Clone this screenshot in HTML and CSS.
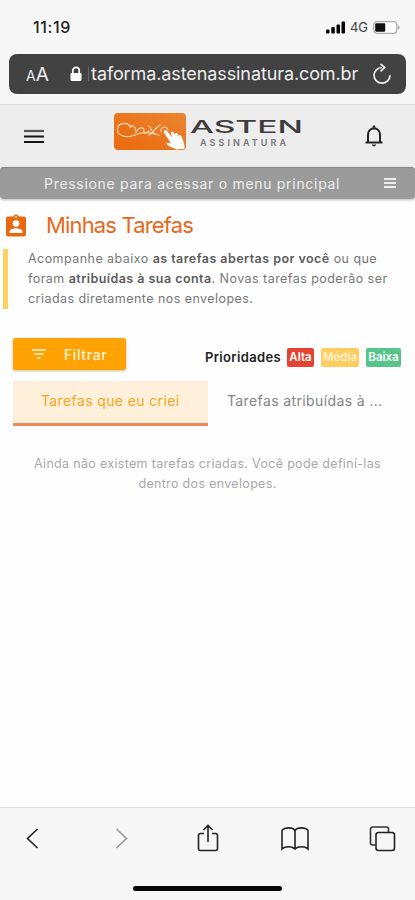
FILE: index.html
```
<!DOCTYPE html>
<html lang="pt-BR">

<head>
    <meta charset="utf-8">
    <title>Minhas Tarefas</title>
    <link rel="stylesheet" href="styles.css">
</head>

<body>
    <div class="browser-top">
        <div class="status">
            <span class="time">11:19</span>
            <svg class="signal" width="20" height="13" viewBox="0 0 20 13">
                <rect x="0" y="8.500" width="3.500" height="4" rx="1" />
                <rect x="5.300" y="6" width="3.500" height="6.500" rx="1" />
                <rect x="10.500" y="3.500" width="3.500" height="9" rx="1" />
                <rect x="15.500" y="0.500" width="3.500" height="12" rx="1" />
            </svg>
            <span class="network">4G</span>
            <svg class="battery" width="27" height="13" viewBox="0 0 27 13">
                <rect x="0.700" y="0.700" width="23" height="11.600" rx="3" fill="#fff" stroke="#aaa" stroke-width="1.200" />
                <rect x="2.200" y="2.300" width="10" height="8.400" rx="1" fill="#111" />
                <path d="M25 4.500q1.500.5 1.500 2t-1.500 2z" fill="#999" />
            </svg>
        </div>
        <div class="address">
            <span class="text-size"><small>A</small>A</span>
            <svg class="lock" width="12" height="16" viewBox="0 0 12 16">
                <rect x="0.500" y="7" width="11" height="8" rx="1.200" fill="#fff" />
                <path d="M2.800 7.500V4.500a3.200 3.200 0 0 1 6.400 0v3" fill="none" stroke="#fff" stroke-width="1.700" />
            </svg>
            <span class="url">taforma.astenassinatura.com.br</span>
            <svg class="reload" width="20" height="22" viewBox="0 0 20 22" fill="none" stroke="#eee" stroke-width="1.700">
                <path d="M10 4.500a8 7.800 0 1 0 8 7.800M8.500 0.800l4.200 3.700-4.200 3.900" />
            </svg>
        </div>
    </div>

    <div class="header">
        <svg class="menu" width="20" height="15" viewBox="0 0 20 15">
            <path d="M0 2h20" stroke="#555" stroke-width="2.200" />
            <path d="M0 7.500h20M0 13h20" stroke="#161616" stroke-width="2.200" />
        </svg>
        <svg class="logo" width="190" height="40" viewBox="0 0 190 40">
            <defs>
                <linearGradient id="orange" x1="0" y1="1" x2="1" y2="0">
                    <stop offset="0" stop-color="#ea690d" />
                    <stop offset="1" stop-color="#ea8530" />
                </linearGradient>
            </defs>
            <rect x="0" y="1" width="72" height="37" rx="4" fill="url(#orange)" />
            <path d="M17 15C12 9 3 11 3.500 18c.5 7 11 8 17 5 7-3 13-4 20-1M16 15c3-3 6 0 6 5 3-5 7-6 8-2-1 4 2 4 5 1M35 14c2 4 5 9 10 9M46 13c-4 2-7 8-11 10M47 20c-1-5 6-7 7-2" fill="none" stroke="#ffd5b2" stroke-width="1.200" stroke-linecap="round" />
            <path d="M50 18.500c1-1.200 2.500-.3 3.200.7l4.800 6-1-4.500c.8-1.500 2.400-1 3 .2l.8 1.700c.2-2.200 2.500-2 3.200-.1l.6 1.600c.4-1.700 2.300-1.500 2.800.2l2.300 6.200c.8 2.500.8 4 .8 6.200L62 37.500c-1-1.400-3-1.400-5-2.500-2-.9-4-1.900-4.500-3.500.8-1.400 3-.5 4.500 0l-6.500-10c-.6-1-1-2-.5-3z" fill="#fff" />
            <text class="logo-name" x="76" y="20.500" textLength="113" lengthAdjust="spacingAndGlyphs">ASTEN</text>
            <text class="logo-sub" x="86" y="33.500" textLength="86">ASSINATURA</text>
        </svg>
        <svg class="bell" width="20" height="22" viewBox="0 0 20 22">
            <path d="M4 17V10c0-3.500 2-6.500 6-6.500s6 3 6 6.500v7" fill="none" stroke="#222" stroke-width="2" />
            <path d="M1.500 17.500h17" stroke="#222" stroke-width="2" />
            <path d="M8.500 3V1.800a1.500 1.500 0 0 1 3 0V3zM8 19.500h4a2 2 0 0 1-4 0z" fill="#333" />
        </svg>
    </div>

    <div class="banner">
        <span>Pressione para acessar o menu principal</span>
        <svg width="12" height="10" viewBox="0 0 12 10" stroke="#eee" stroke-width="1.800">
            <path d="M0 1h12M0 5h12M0 9h12" />
        </svg>
    </div>

    <div class="content">
        <div class="heading">
            <svg width="20" height="23" viewBox="0 0 20 23">
                <path d="M2 2.500h5.200a3 3 0 0 1 5.600 0H18a2 2 0 0 1 2 2v16a2 2 0 0 1-2 2H2a2 2 0 0 1-2-2v-16a2 2 0 0 1 2-2z" fill="#e9680c" />
                <circle cx="10" cy="3.300" r="1" fill="#fff" />
                <circle cx="10" cy="9.500" r="3.300" fill="#fff" />
                <path d="M3.500 19v-1.500c0-2.300 4.300-3.300 6.500-3.300s6.500 1 6.500 3.300V19z" fill="#fff" />
            </svg>
            <h1>Minhas Tarefas</h1>
        </div>

        <p class="intro">Acompanhe abaixo <b>as tarefas abertas por você</b> ou que<br>foram <b>atribuídas à sua conta</b>. Novas tarefas poderão ser<br>criadas diretamente nos envelopes.</p>

        <div class="toolbar">
            <button class="filter">
                <svg width="14" height="10" viewBox="0 0 14 10" stroke="#fff3d8" stroke-width="1.700">
                    <path d="M0 1h14M2.500 5h9M5.300 9h3.400" />
                </svg>
                <span>Filtrar</span>
            </button>
            <div class="priorities">
                <span class="label">Prioridades</span>
                <span class="tag high">Alta</span>
                <span class="tag medium">Média</span>
                <span class="tag low">Baixa</span>
            </div>
        </div>

        <div class="tabs">
            <div class="tab active">Tarefas que eu criei</div>
            <div class="tab">Tarefas atribuídas à ...</div>
        </div>

        <p class="empty">Ainda não existem tarefas criadas. Você pode definí-las<br>dentro dos envelopes.</p>
    </div>

    <div class="browser-bottom">
        <div class="nav">
            <svg width="28" height="30" viewBox="0 0 28 30">
                <path d="M18.500 6L8.500 15.500l10 9.500" stroke="#222" />
            </svg>
            <svg width="28" height="30" viewBox="0 0 28 30">
                <path d="M10.500 6l10 9.500-10 9.500" stroke="#999" />
            </svg>
            <svg width="28" height="30" viewBox="0 0 28 30">
                <path d="M10 10.500H6.500a2 2 0 0 0-2 2v13a2 2 0 0 0 2 2h15a2 2 0 0 0 2-2v-13a2 2 0 0 0-2-2H18M14 19V3M9.500 7L14 2.500 18.500 7" stroke="#222" />
            </svg>
            <svg width="28" height="30" viewBox="0 0 28 30">
                <path d="M14 26V7.500c-2-3.500-10.500-3.500-13 0V26c3-3 10-3 13 0 3-3 10-3 13 0V7.500c-2.500-3.500-11-3.500-13 0" stroke="#222" />
            </svg>
            <svg width="28" height="30" viewBox="0 0 28 30">
                <path d="M7.500 22H4.500a2 2 0 0 1-2-2V6a2 2 0 0 1 2-2h14a2 2 0 0 1 2 2v3" stroke="#333" />
                <rect x="8" y="9.500" width="18.500" height="18" rx="2.500" stroke="#222" />
            </svg>
        </div>
        <div class="home-bar"></div>
    </div>
</body>

</html>
```
FILE: styles.css
```
* {
    box-sizing: border-box;
}

body {
    display: flex;
    flex-direction: column;
    height: 900px;
    margin: 0;
    overflow: hidden;
    background-color: #fefefe;
    font-family: Inter, "Liberation Sans", sans-serif;
}

svg {
    display: block;
    flex: none;
}

.browser-top {
    height: 105px;
    background-color: #f7f7f7;
    border-bottom: 1px solid #dcdfe0;
}

.status {
    display: flex;
    align-items: center;
    height: 54px;
    padding: 0 15px 0 33px;
}

.time {
    flex: 1;
    font-size: 16px;
    font-weight: 500;
    letter-spacing: 0.6px;
    color: #222;
}

.network {
    margin: 0 5px 0 4px;
    font-size: 13px;
    color: #444;
}

.address {
    display: flex;
    align-items: center;
    height: 40px;
    margin: 0 9px;
    padding: 0 14px 0 17px;
    border-radius: 8px;
    background-color: #424242;
    color: #eee;
}

.text-size {
    width: 44px;
    font-size: 19px;
}

.text-size small {
    font-size: 14px;
}

.url {
    flex: 1;
    margin-left: 6px;
    padding-left: 2px;
    border-left: 1px solid #666;
    font-size: 18px;
    line-height: 14px;
    letter-spacing: -0.1px;
    white-space: nowrap;
}

.header {
    display: flex;
    align-items: center;
    height: 62px;
    padding: 0 31px 0 24px;
    background-color: #ededed;
}

.logo {
    margin: -9px 0 0 70px;
}

.logo-name {
    font-size: 17px;
    font-weight: 500;
    fill: #3c3c3c;
}

.logo-sub {
    font-size: 9px;
    font-weight: 600;
    fill: #777;
}

.bell {
    margin-left: auto;
}

.banner {
    display: flex;
    align-items: center;
    justify-content: space-between;
    height: 32px;
    padding: 0 19px 0 44px;
    border-radius: 4px;
    background-color: #9b9b9b;
    box-shadow: 0 1px 3px #bbb, inset 0 1px #868686;
    color: #eee;
    font-size: 14px;
    letter-spacing: 0.7px;
}

.content {
    flex: 1;
}

.heading {
    display: flex;
    align-items: center;
    gap: 20px;
    margin: 12px 0 0 6px;
    height: 28px;
}

h1 {
    margin: 0;
    color: #e9681a;
    font-size: 22px;
    font-weight: 400;
    letter-spacing: -0.85px;
}

.intro {
    margin: 10px 0 0 3px;
    padding-left: 20px;
    border-left: 5px solid #ffcf60;
    color: #777;
    font-size: 12.500px;
    line-height: 20px;
    letter-spacing: 0.45px;
    white-space: nowrap;
}

.intro b {
    color: #5c5c5c;
    font-weight: 600;
}

.toolbar {
    display: flex;
    justify-content: space-between;
    margin: 29px 14px 0 13px;
}

.filter {
    display: flex;
    align-items: center;
    gap: 18px;
    width: 113px;
    height: 32px;
    padding: 0 0 0 19px;
    border: 0;
    border-radius: 2px;
    background-color: #ffa304;
    box-shadow: 0 1px 3px #c5b99f;
    color: #fff3d8;
    font: 500 14px Inter, sans-serif;
    letter-spacing: 0.6px;
}

.priorities {
    display: flex;
    align-items: center;
    height: 38px;
    font-size: 11.500px;
    font-weight: 600;
}

.label {
    margin-right: 6px;
    color: #222;
    font-size: 13px;
    letter-spacing: 0.35px;
}

.tag {
    width: 27px;
    height: 19px;
    border-radius: 2px;
    color: #fff;
    line-height: 19px;
    text-align: center;
}

.high {
    background-color: #e34330;
}

.medium {
    width: 38px;
    margin: 0 7px;
    background-color: #ffcc60;
    color: #fff0cc;
}

.low {
    width: 35px;
    background-color: #55c58b;
}

.tabs {
    display: flex;
    margin: 5px 13px 0;
}

.tab {
    flex: 1;
    height: 45px;
    color: #858585;
    font-size: 14px;
    line-height: 39px;
    letter-spacing: 0.38px;
    text-align: center;
    white-space: nowrap;
}

.active {
    background-color: #fff0dc;
    border-bottom: 3px solid #ed8a5c;
    color: #f9a51e;
}

.empty {
    margin: 28px 0 0;
    color: #a9a9a9;
    font-size: 12.500px;
    line-height: 20px;
    letter-spacing: 0.32px;
    text-align: center;
}

.browser-bottom {
    height: 93px;
    border-top: 1px solid #e0e0e0;
    background-color: #f7f7f7;
}

.nav {
    display: flex;
    justify-content: space-between;
    padding: 15px 19px 0;
}

.nav svg {
    fill: none;
    stroke-width: 1.600;
}

.home-bar {
    width: 149px;
    height: 5px;
    margin: 33px auto 0;
    border-radius: 3px;
    background-color: #050505;
}
```
